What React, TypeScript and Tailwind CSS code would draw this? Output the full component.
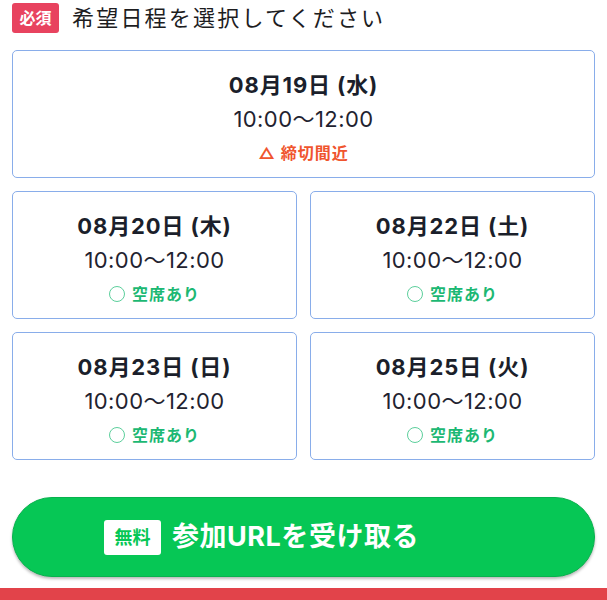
import { type ReactNode } from 'react'

type Slot = {
  date: string
  dow: string
  time: string
  status: 'few' | 'open'
}

const slots: Slot[] = [
  { date: '08月19日', dow: '(水)', time: '10:00～12:00', status: 'few' },
  { date: '08月20日', dow: '(木)', time: '10:00～12:00', status: 'open' },
  { date: '08月22日', dow: '(土)', time: '10:00～12:00', status: 'open' },
  { date: '08月23日', dow: '(日)', time: '10:00～12:00', status: 'open' },
  { date: '08月25日', dow: '(火)', time: '10:00～12:00', status: 'open' },
]

/* ─── One schedule card ─── */
function SlotCard({ slot, className = '' }: { slot: Slot; className?: string }): ReactNode {
  return (
    <button
      type="button"
      className={`flex h-[128px] flex-col items-center rounded-[5px] border-[1.5px] border-[#89adea] bg-white pt-[17px] text-center ${className}`}
    >
      <span className="text-[22px] font-bold leading-[34px] tracking-[0.04em] text-[#1b1f2b]">
        {slot.date} {slot.dow}
      </span>
      <span className="text-[22px] font-normal leading-[34px] tracking-[0.02em] text-[#1f2330]">
        {slot.time}
      </span>
      {slot.status === 'few' ? (
        <span className="text-[16px] font-bold leading-[34px] tracking-[0.06em] text-[#f0552e]">
          △ 締切間近
        </span>
      ) : (
        <span className="flex items-center gap-[7px] text-[16px] font-bold leading-[34px] tracking-[0.06em] text-[#1cb873]">
          <span className="inline-block h-[16px] w-[16px] rounded-full border-[1.5px] border-[#5ccf9c]" />
          空席あり
        </span>
      )}
    </button>
  )
}

export default function App() {
  return (
    <div
      className="flex h-[600px] w-[607px] flex-col bg-white"
      style={{ fontFamily: 'Inter, "Noto Sans CJK JP", sans-serif' }}
    >
      {/* Heading */}
      <div className="flex items-center gap-[13px] px-[12px] pt-[3px]">
        <span className="flex h-[30px] w-[47px] items-center justify-center rounded-[3px] bg-[#e8435f] text-[16px] font-bold text-white">
          必須
        </span>
        <h2 className="text-[22px] font-normal leading-[30px] tracking-[0.1em] text-[#1d1d1f]">
          希望日程を選択してください
        </h2>
      </div>

      {/* Date cards */}
      <div className="mt-[17px] grid grid-cols-2 gap-[13px] px-[12px]">
        <SlotCard slot={slots[0]} className="col-span-2" />
        {slots.slice(1).map((s) => (
          <SlotCard key={s.date} slot={s} />
        ))}
      </div>

      {/* CTA */}
      <div className="mt-[37px] px-[12px]">
        <button
          type="button"
          className="flex h-[80px] w-full items-center justify-center gap-[11px] rounded-full border border-[#07b24d] bg-[#06c755] pr-[84px] shadow-[0_2px_3px_rgba(0,0,0,0.28)]"
        >
          <span className="flex h-[35px] w-[57px] items-center justify-center rounded-[3px] bg-white text-[18px] font-bold text-[#06c755]">
            無料
          </span>
          <span className="text-[27px] font-bold tracking-[0.02em] text-white">参加URLを受け取る</span>
        </button>
      </div>

      {/* Bottom bar */}
      <div className="mt-auto h-[12px] w-full bg-[#e2434a]" />
    </div>
  )
}
